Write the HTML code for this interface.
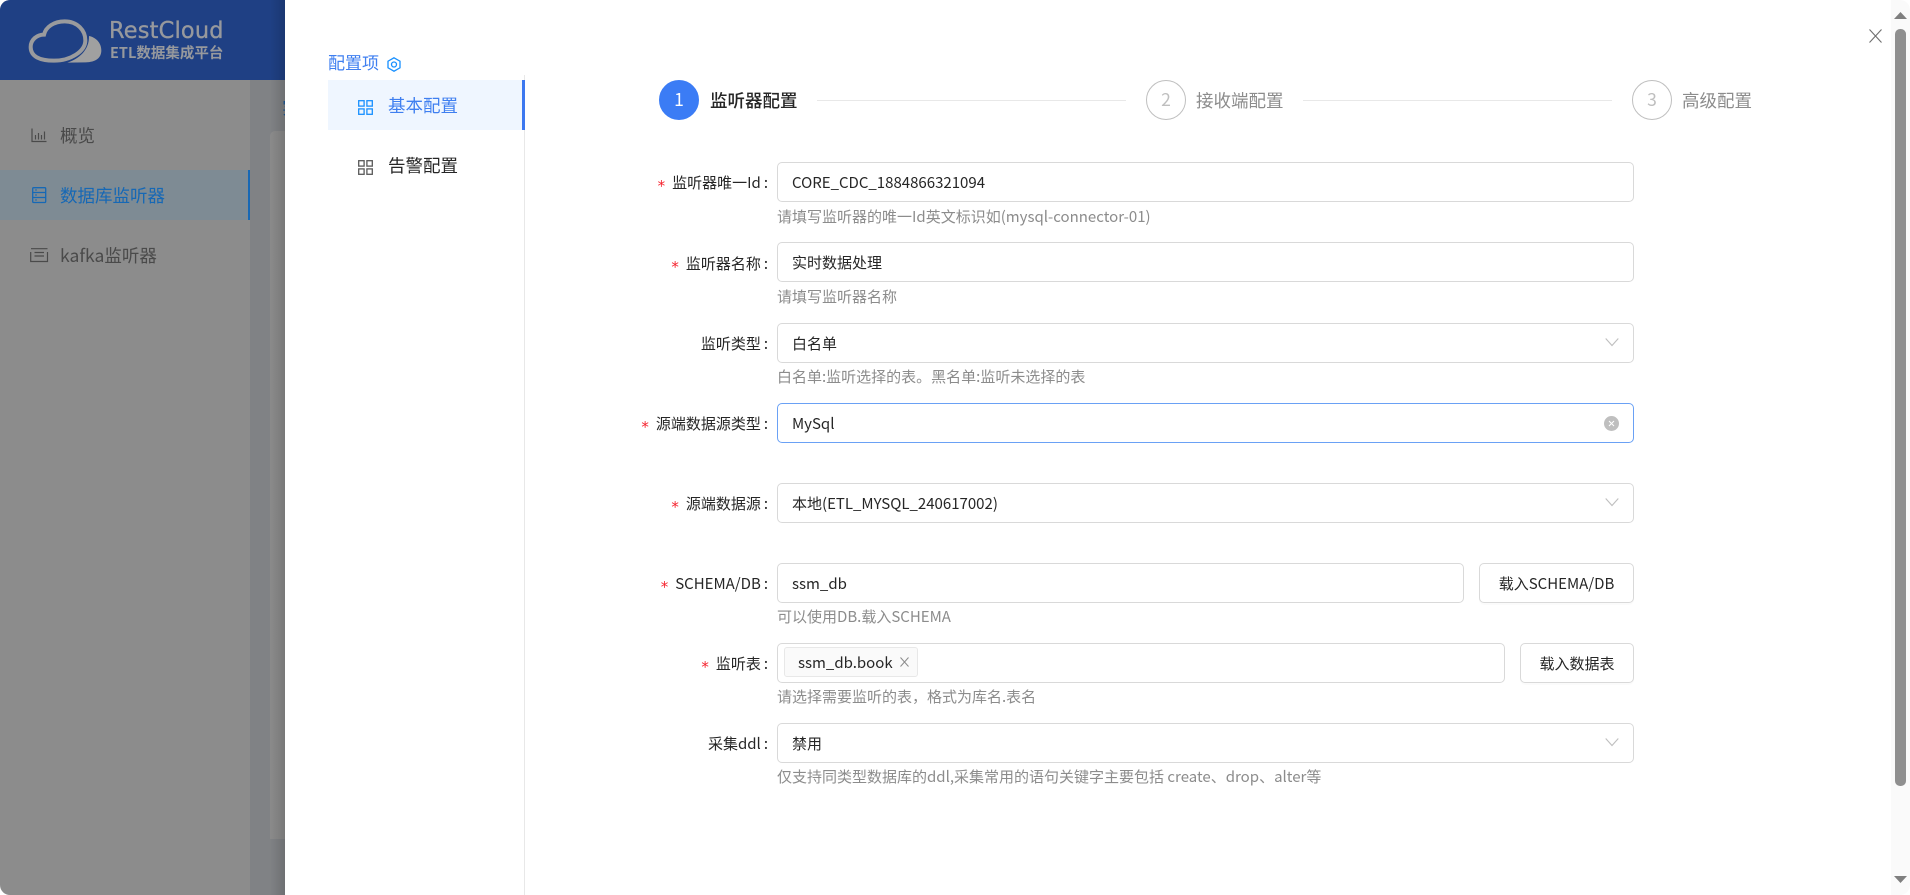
<!DOCTYPE html>
<html lang="zh">
<head>
<meta charset="utf-8">
<title>RestCloud</title>
<style>
html,body{margin:0;padding:0;width:1910px;height:895px;overflow:hidden;background:#fff}
body{font-family:"Noto Sans CJK SC","Liberation Sans",sans-serif;position:relative;color:#262626}
.a{position:absolute;white-space:nowrap}
.t{position:absolute;white-space:nowrap;line-height:24px;height:24px}
.inp{position:absolute;box-sizing:border-box;height:40px;border:1px solid #d9d9d9;border-radius:5px;background:#fff;font-size:15px;line-height:40px;padding-left:14px;color:#262626;left:777px;width:857px}
.lab{position:absolute;right:1142px;height:24px;line-height:24px;font-size:15px;white-space:nowrap;color:#262626;letter-spacing:0}
.lab i{font-style:normal;color:#f5222d;font-size:15px;margin-right:7px;position:relative;top:3px;font-family:"DejaVu Sans",sans-serif}
.lab b{font-weight:400;margin-left:3px;margin-right:0}
.hint{position:absolute;left:777px;font-size:15px;height:24px;line-height:24px;color:#8c8c8c;white-space:nowrap}
.btn{position:absolute;box-sizing:border-box;height:40px;border:1px solid #d9d9d9;border-radius:5px;background:#fff;font-size:15px;line-height:40px;text-align:center;color:#262626;box-shadow:0 2px 0 rgba(0,0,0,.015)}
.stepc{position:absolute;box-sizing:border-box;top:80px;width:40px;height:40px;border-radius:50%;text-align:center;font-size:17.5px;line-height:38px;border:1px solid #bfbfbf;color:#bfbfbf;background:#fff}
.stept{position:absolute;top:89px;height:24px;line-height:24px;font-size:17.5px;color:#8c8c8c;white-space:nowrap}
.line{position:absolute;top:100px;height:1px;background:#e8e8e8}
svg{position:absolute;display:block;overflow:visible}
</style>
</head>
<body>
<!-- background app -->
<div class="a" style="left:0;top:0;width:285px;height:895px;background:#8c8c8c;border-radius:10px 0 0 10px"></div>
<div class="a" style="left:0;top:0;width:285px;height:80px;background:#1f4084;border-radius:10px 0 0 0"></div>
<div class="a" style="left:250px;top:80px;width:35px;height:815px;background:#808285"></div>
<div class="a" style="left:270px;top:131px;width:15px;height:708px;background:#8b8b8b;border-radius:5px 0 0 0"></div>
<div class="a" style="left:250px;top:80px;width:35px;height:815px;overflow:hidden"><div class="a" style="left:32px;top:16px;font-size:17.5px;line-height:24px;color:#1c5a9c">实时</div></div>

<!-- logo -->
<svg style="left:24px;top:12px" width="84" height="56" viewBox="0 0 252 168">
  <path d="M195 72 C215 76 232 92 232 115 C232 138 215 150 185 151 L130 152 C165 140 196 115 195 72Z" fill="#a0a0a0"/>
  <path d="M60 68 C65 45 90 28 122 28 C160 28 184 55 184 85 C184 118 140 146 90 146 C50 146 20 135 20 105 C20 82 40 68 60 68Z" fill="none" stroke="#9a9b9d" stroke-width="12"/>
</svg>
<div class="t" style="left:109px;top:17px;font-size:23px;line-height:28px;height:28px;font-weight:500;color:#97999d;letter-spacing:.2px;font-family:'DejaVu Sans','Liberation Sans',sans-serif;transform-origin:0 50%;transform:scaleX(.975);-webkit-text-stroke:.35px #97999d">RestCloud</div>
<div class="t" style="left:110px;top:43px;font-size:14.500px;line-height:20px;height:20px;font-weight:700;color:#97999d;letter-spacing:0">ETL数据集成平台</div>

<!-- sidebar -->
<div class="a" style="left:0;top:170px;width:250px;height:50px;background:#7e8b94"></div>
<div class="a" style="left:248px;top:170px;width:2px;height:50px;background:#1668b5"></div>
<svg style="left:31px;top:128px" width="16" height="15" viewBox="0 0 16 15" fill="none" stroke="#4a4a4a" stroke-width="1.200"><path d="M1 .5V13.500H15.500"/><path d="M4.500 11.500V7M7.500 11.500V5M10.500 11.500V7M13.500 11.500V3.500"/></svg>
<div class="t" style="left:60px;top:124px;font-size:17.500px;color:#4a4a4a">概览</div>
<svg style="left:32px;top:187px" width="15" height="16" viewBox="0 0 15 16" fill="none" stroke="#1668b5" stroke-width="1.300"><rect x=".7" y=".7" width="13" height="14.800" rx="1"/><path d="M.7 5.500H13.700M.7 10.500H13.700"/><path d="M3 3H5M3 8H5M3 13H5" stroke-width="1"/></svg>
<div class="t" style="left:60px;top:184px;font-size:17.500px;color:#1668b5">数据库监听器</div>
<svg style="left:30px;top:248px" width="18" height="15" viewBox="0 0 18 15" fill="none" stroke="#4a4a4a" stroke-width="1.200"><path d="M1 .7H17.500M4.500 4.500H14M4.500 8H14M.7 4V13.500H17.500V4"/></svg>
<div class="t" style="left:60px;top:244px;font-size:17.500px;color:#4a4a4a">kafka监听器</div>

<!-- drawer -->
<div class="a" style="left:270px;top:0;width:15px;height:895px;background:linear-gradient(to right,rgba(0,0,0,0),rgba(0,0,0,.14))"></div>
<div class="a" style="left:285px;top:0;width:1625px;height:895px;background:#fff"></div>

<div class="t" style="left:328px;top:50px;font-size:17px;color:#3f7ff0">配置项</div>
<svg style="left:387px;top:57px" width="14" height="15" viewBox="0 0 14 15" fill="none" stroke="#1890ff" stroke-width="1.300"><path d="M7 .8L13 4.200V10.800L7 14.200L1 10.800V4.200Z"/><circle cx="7" cy="7.500" r="2.500"/></svg>

<div class="a" style="left:524px;top:75px;width:1px;height:820px;background:#e8e8e8"></div>
<div class="a" style="left:328px;top:80px;width:197px;height:50px;background:#eff6ff"></div>
<div class="a" style="left:522px;top:80px;width:3px;height:50px;background:#3c78f0"></div>
<svg style="left:358px;top:100px" width="15" height="15" viewBox="0 0 15 15" fill="none" stroke="#1890ff" stroke-width="1.300"><rect x=".7" y=".7" width="5.400" height="5.400"/><rect x="8.900" y=".7" width="5.400" height="5.400"/><rect x=".7" y="8.900" width="5.400" height="5.400"/><rect x="8.900" y="8.900" width="5.400" height="5.400"/></svg>
<div class="t" style="left:388px;top:94px;font-size:17.500px;color:#3f7ff0">基本配置</div>
<svg style="left:358px;top:160px" width="15" height="15" viewBox="0 0 15 15" fill="none" stroke="#595959" stroke-width="1.300"><rect x=".7" y=".7" width="5.400" height="5.400"/><rect x="8.900" y=".7" width="5.400" height="5.400"/><rect x=".7" y="8.900" width="5.400" height="5.400"/><rect x="8.900" y="8.900" width="5.400" height="5.400"/></svg>
<div class="t" style="left:388px;top:154px;font-size:17.500px;color:#262626">告警配置</div>

<!-- steps -->
<div class="stepc" style="left:659px;background:#3b7cf5;border-color:#3b7cf5;color:#fff">1</div>
<div class="stept" style="left:710px;color:#262626;font-weight:500">监听器配置</div>
<div class="line" style="left:817px;width:309px"></div>
<div class="stepc" style="left:1146px">2</div>
<div class="stept" style="left:1196px">接收端配置</div>
<div class="line" style="left:1303px;width:309px"></div>
<div class="stepc" style="left:1632px">3</div>
<div class="stept" style="left:1682px">高级配置</div>

<!-- row 1 -->
<div class="lab" style="top:171px"><i>*</i>监听器唯一Id<b>:</b></div>
<div class="inp" style="top:162px">CORE_CDC_1884866321094</div>
<div class="hint" style="top:205px">请填写监听器的唯一Id英文标识如(mysql-connector-01)</div>
<!-- row 2 -->
<div class="lab" style="top:252px"><i>*</i>监听器名称<b>:</b></div>
<div class="inp" style="top:242px">实时数据处理</div>
<div class="hint" style="top:285px">请填写监听器名称</div>
<!-- row 3 -->
<div class="lab" style="top:332px">监听类型<b>:</b></div>
<div class="inp" style="top:323px">白名单</div>
<svg style="left:1605px;top:337px" width="14" height="10" viewBox="0 0 14 10" fill="none" stroke="#bfbfbf" stroke-width="1.100"><path d="M.7 1.500L7 8.500L13.300 1.500"/></svg>
<div class="hint" style="top:365px">白名单:监听选择的表。黑名单:监听未选择的表</div>
<!-- row 4 -->
<div class="lab" style="top:412px"><i>*</i>源端数据源类型<b>:</b></div>
<div class="inp" style="top:403px;border-color:#6aa1f5">MySql</div>
<svg style="left:1604px;top:416px" width="15" height="15" viewBox="0 0 15 15"><circle cx="7.500" cy="7.500" r="7.500" fill="#bfbfbf"/><path d="M5 5L10 10M10 5L5 10" stroke="#fff" stroke-width="1"/></svg>
<!-- row 5 -->
<div class="lab" style="top:492px"><i>*</i>源端数据源<b>:</b></div>
<div class="inp" style="top:483px">本地(ETL_MYSQL_240617002)</div>
<svg style="left:1605px;top:497px" width="14" height="10" viewBox="0 0 14 10" fill="none" stroke="#bfbfbf" stroke-width="1.100"><path d="M.7 1.500L7 8.500L13.300 1.500"/></svg>
<!-- row 6 -->
<div class="lab" style="top:572px"><i>*</i>SCHEMA/DB<b>:</b></div>
<div class="inp" style="top:563px;width:687px">ssm_db</div>
<div class="btn" style="left:1479px;top:563px;width:155px">载入SCHEMA/DB</div>
<div class="hint" style="top:605px">可以使用DB.载入SCHEMA</div>
<!-- row 7 -->
<div class="lab" style="top:652px"><i>*</i>监听表<b>:</b></div>
<div class="inp" style="top:643px;width:728px"></div>
<div class="a" style="left:784px;top:647px;width:134px;height:30px;box-sizing:border-box;background:#fafafa;border:1px solid #e8e8e8;border-radius:3px"></div>
<div class="t" style="left:798px;top:651px;font-size:15px;color:#262626">ssm_db.book</div>
<svg style="left:900px;top:657px" width="9" height="10" viewBox="0 0 9 10" fill="none" stroke="#8c8c8c" stroke-width="1"><path d="M.5 .5L8.500 9.500M8.500 .5L.5 9.500"/></svg>
<div class="btn" style="left:1520px;top:643px;width:114px">载入数据表</div>
<div class="hint" style="top:685px">请选择需要监听的表，格式为库名.表名</div>
<!-- row 8 -->
<div class="lab" style="top:732px">采集ddl<b>:</b></div>
<div class="inp" style="top:723px">禁用</div>
<svg style="left:1605px;top:737px" width="14" height="10" viewBox="0 0 14 10" fill="none" stroke="#bfbfbf" stroke-width="1.100"><path d="M.7 1.500L7 8.500L13.300 1.500"/></svg>
<div class="hint" style="top:765px">仅支持同类型数据库的ddl,采集常用的语句关键字主要包括 create、drop、alter等</div>

<!-- close -->
<svg style="left:1869px;top:29px" width="13" height="14" viewBox="0 0 13 14" fill="none" stroke="#6e6e6e" stroke-width="1.100"><path d="M.5 .5L12.500 13.500M12.500 .5L.5 13.500"/></svg>

<!-- scrollbar -->
<div class="a" style="left:1891px;top:0;width:19px;height:895px;background:#fafafa;border-radius:0 10px 10px 0"></div>
<div class="a" style="left:1895px;top:29px;width:11px;height:757px;background:#8f8f8f;border-radius:5px"></div>
<svg style="left:1894px;top:11px" width="13" height="9" viewBox="0 0 13 9"><path d="M6.500 1L13 8H0Z" fill="#7f7f7f"/></svg>
<svg style="left:1894px;top:875px" width="13" height="9" viewBox="0 0 13 9"><path d="M0 1H13L6.500 8Z" fill="#7f7f7f"/></svg>
</body>
</html>
